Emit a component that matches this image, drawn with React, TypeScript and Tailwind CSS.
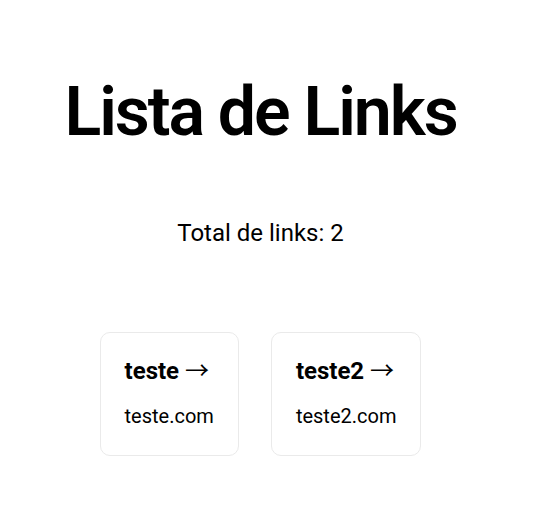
import React from "react";

const links = [
  { title: "teste", url: "teste.com" },
  { title: "teste2", url: "teste2.com" },
];

export default function App() {
  return (
    <div
      className="min-h-screen bg-white text-black pr-[15px]"
      style={{ fontFamily: "Roboto, 'Liberation Sans', sans-serif" }}
    >
      <main className="flex flex-col items-center pt-[73px] pb-20">
        <h1 className="text-[68px] leading-[1.15] font-semibold tracking-[-0.03em] m-0">
          Lista de Links
        </h1>
        <p className="text-2xl leading-normal mt-16 mb-[65px]">Total de links: {links.length}</p>
        <div className="flex flex-wrap justify-center">
          {links.map((link) => (
            <a
              key={link.url}
              href="#"
              className="m-4 p-6 border border-[#eaeaea] rounded-[10px] text-left"
            >
              <h2 className="text-2xl leading-[28px] font-bold mb-4">
                {link.title}{" "}
                <span className="font-normal leading-none font-['Noto_Sans_CJK_SC']">&rarr;</span>
              </h2>
              <p className="text-xl leading-normal">{link.url}</p>
            </a>
          ))}
        </div>
      </main>
    </div>
  );
}
